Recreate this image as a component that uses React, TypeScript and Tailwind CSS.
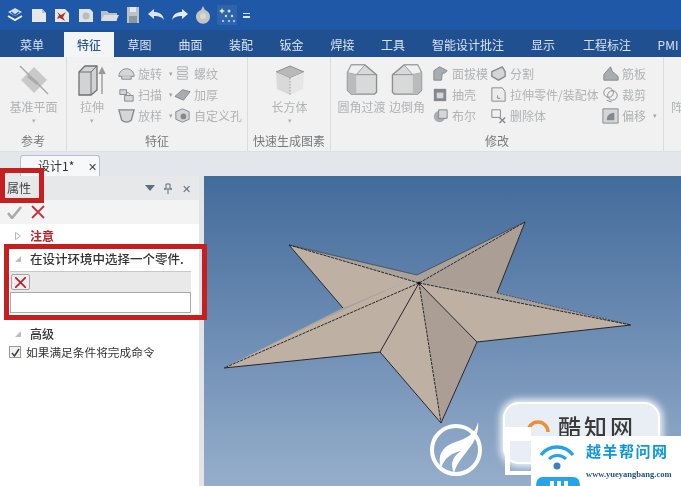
import React from "react";

const cjk = { fontFamily: '"Noto Sans CJK SC","Liberation Sans",sans-serif' };

function Q({ children }: { children: React.ReactNode }) {
  return <svg width="20" height="20" viewBox="0 0 20 20" className="shrink-0">{children}</svg>;
}

const topIcons: React.ReactNode[] = [
  <Q><path d="M3 7l7-4 7 4-7 4z" fill="#cfe0f2" /><path d="M3 11l7 4 7-4" fill="none" stroke="#e6eef8" strokeWidth="2" /><path d="M6 7l4 3 4-3" fill="none" stroke="#2f5fa8" strokeWidth="1.5" /></Q>,
  <Q><path d="M3 4h10l4 4v9H3z" fill="#e6e8ea" /><path d="M13 4l4 4h-4z" fill="#b9c2cc" /></Q>,
  <Q><path d="M3 4h10l4 4v9H3z" fill="#e6e8ea" /><path d="M5 7l4 3 5-3-3 5 2 4-5-3-3 1 2-4z" fill="#b03038" /></Q>,
  <Q><path d="M3 4h11l3 3v10H3z" fill="#dfe2e4" /><circle cx="10" cy="11" r="3.5" fill="#b7bcc0" /></Q>,
  <Q><path d="M2 6h6l2 2h8v8H2z" fill="#b9bfc5" /><path d="M5 10h15l-3 6H2z" fill="#dbdfe3" /></Q>,
  <Q><path d="M4 2h12v16H4z" fill="#bcc2c9" /><path d="M7 2h6v5H7z" fill="#e6e8ea" /><path d="M6 11h8v7H6z" fill="#8d97a3" /></Q>,
  <Q><path d="M2 9l6-5v3c5 0 9 2 10 8-2-3-5-4-10-4v3z" fill="#dce3eb" /></Q>,
  <Q><path d="M18 9l-6-5v3C7 7 3 9 2 15c2-3 5-4 10-4v3z" fill="#e6ebf0" /></Q>,
  <Q><path d="M10 1l2 4a7 7 0 1 1-4 0z" fill="#c3c5c4" /><circle cx="10" cy="11" r="3" fill="#dfd8c8" /></Q>,
];

function Launch() {
  return (
    <div className="w-[20px] h-[20px] bg-[#2f64ad] flex items-center justify-center">
      <svg width="20" height="20" viewBox="0 0 20 20">
        <path d="M5 3l1 2 2 1-2 1-1 2-1-2-2-1 2-1z" fill="#e8e6a0" />
        <circle cx="12" cy="6" r="1.5" fill="#cfe0f2" />
        <circle cx="9" cy="11" r="1.2" fill="#cfe0f2" />
        <circle cx="15" cy="11" r="1.2" fill="#cfe0f2" />
        <circle cx="6" cy="16" r="1" fill="#cfe0f2" />
        <circle cx="12" cy="16" r="1" fill="#cfe0f2" />
        <circle cx="17" cy="16" r="1" fill="#cfe0f2" />
      </svg>
    </div>
  );
}

const tabs: [string, string][] = [
  ["菜单", "w-[64px]"], ["特征", "w-[50px]"], ["草图", "w-[51px]"], ["曲面", "w-[51px]"], ["装配", "w-[50px]"], ["钣金", "w-[51px]"],
  ["焊接", "w-[51px]"], ["工具", "w-[50px]"], ["智能设计批注", "w-[100px]"], ["显示", "w-[50px]"], ["工程标注", "w-[78px]"], ["PMI", "w-[44px]"],
];

function Mini({ kind }: { kind: number }) {
  const a = "#a9adb1", b = "#d4d6d8", c = "#85898d";
  const shapes: React.ReactNode[] = [
    <><path d="M2 13c0-5 4-8 8-8s8 3 8 8z" fill={b} stroke={c} /><path d="M5 13v3h10v-3" fill={b} stroke={c} /></>,
    <><path d="M3 5h7v5H3z" fill={b} stroke={c} /><path d="M8 11h9v6H8z" fill={b} stroke={c} /><path d="M10 8c3 0 4 1 4 3" fill="none" stroke={c} /></>,
    <path d="M2 4h16l-3 11q-5 4-10 0z" fill={b} stroke={c} strokeWidth="1.4" />,
    <path d="M5 3h10v3H5zM5 8h10v3H5zM5 13h10v3H5z" fill="none" stroke={a} />,
    <path d="M2 12l8-7 8 2-7 9z" fill={a} stroke={c} />,
    <><path d="M3 6l7-3 7 3v8l-7 3-7-3z" fill={b} stroke={c} /><circle cx="11" cy="11" r="3" fill={c} /></>,
    <path d="M3 17V7l6-4 8 4-3 3-2-1-1 8z" fill={a} stroke={c} />,
    <><path d="M3 4h13v13H3z" fill={c} /><path d="M6 8h7v6H6z" fill={b} /></>,
    <><circle cx="9" cy="11" r="6" fill={a} /><path d="M8 4h9v9H8z" fill={b} stroke={c} /></>,
    <path d="M3 8l11-5 3 5v5l-7 4-7-4z" fill={b} stroke={c} strokeWidth="1.4" />,
    <><path d="M3 3h11l3 4v10H3z" fill="#ececec" stroke={c} /><path d="M9 11v3h3" fill="none" stroke={c} /></>,
    <><path d="M3 4h9v8H3z" fill="none" stroke={c} /><path d="M11 12l6 6M17 12l-6 6" stroke={c} strokeWidth="1.5" /></>,
    <path d="M3 17V11l7-8 2 5 6 5v4z" fill={a} stroke={c} />,
    <><circle cx="8" cy="8" r="5" fill="none" stroke={c} /><circle cx="12" cy="11" r="5" fill="none" stroke={c} /><path d="M6 16l5 2" stroke={c} /></>,
    <><path d="M2 3h16v15H2z" fill={b} stroke={c} /><path d="M6 15c0-5 3-8 8-8v8z" fill={c} /></>,
  ];
  return <svg width="19" height="19" viewBox="0 0 20 20" className="shrink-0">{shapes[kind]}</svg>;
}

function Row({ kind, text, arrow }: { kind: number; text: string; arrow?: boolean }) {
  return (
    <div className="h-[21px] flex items-center gap-[2px] whitespace-nowrap text-[12px] text-[#b0b2b4]">
      <Mini kind={kind} />
      <span>{text}</span>
      {arrow && <span className="ml-[5px] text-[7px] text-[#a6a6a6]">▾</span>}
    </div>
  );
}

function Big({ icon, label, arrow, w }: { icon: React.ReactNode; label: string; arrow?: boolean; w: string }) {
  return (
    <div className={`${w} shrink-0 flex flex-col items-center text-[12px] text-[#b0b2b4] whitespace-nowrap`}>
      <div className="h-[33px] flex items-end justify-center">{icon}</div>
      <div className="leading-[16px] mt-[3px]">{label}</div>
      {arrow && <div className="text-[7px] leading-[10px]">▾</div>}
    </div>
  );
}

function Group({ w, label, children }: { w: string; label: string; children: React.ReactNode }) {
  return (
    <div className={`${w} shrink-0 h-full flex flex-col border-r border-[#dcdcdc]`}>
      <div className="h-[74px] flex items-start pt-[6px]">{children}</div>
      <div className="flex-1 text-center text-[12px] text-[#77797b] leading-[20px] whitespace-nowrap">{label}</div>
    </div>
  );
}

function Chamfer({ flip }: { flip?: boolean }) {
  return (
    <svg width="34" height="33" viewBox="0 0 34 34" style={flip ? { transform: "scaleX(-1)" } : undefined}>
      <path d="M2 12L14 2h14l4 8v18l-4 4H4l-2-2z" fill="#d9d9d9" stroke="#8b8f92" strokeWidth="1.4" />
      <path d="M2 12h21l9-2" fill="none" stroke="#8b8f92" />
      <path d="M23 12L14 2h14l4 8z" fill="#f0f0f0" stroke="#9a9da0" />
      <path d="M23 12l9-2v18l-4 4h-5z" fill="#b9bbbd" />
    </svg>
  );
}

export default function App() {
  return (
    <div className="w-[681px] h-[486px] overflow-hidden flex flex-col relative blur-[0.5px] bg-[#f1f1f1]" style={cjk}>
      <div className="h-[30px] shrink-0 bg-[#1f58a6] flex items-center pl-[5px] gap-[3.500px]">
        {topIcons.map((ic, i) => (
          <React.Fragment key={i}>{ic}</React.Fragment>
        ))}
        <Launch />
        <div className="ml-[3px] w-[7px] flex flex-col gap-[2px]">
          <div className="h-[1px] bg-[#dce6f2]" />
          <div className="h-[2px] bg-[#dce6f2]" />
        </div>
      </div>

      <div className="h-[27px] shrink-0 bg-[#20508f] flex items-end overflow-hidden">
        {tabs.map(([t, w]) => (
          <div
            key={t}
            className={`${w} shrink-0 h-[25px] flex items-center justify-center text-[12px] ${t === "特征" ? "bg-[#f3f5f6] text-[#2a5a9a] font-medium" : "text-[#d9e4f1]"}`}
          >
            {t}
          </div>
        ))}
      </div>

      <div className="h-[95px] shrink-0 bg-[#f1f1f1] flex border-b border-[#e0e0e0] overflow-hidden">
        <Group w="w-[67px]" label="参考">
          <Big
            w="w-[67px]"
            label="基准平面"
            arrow
            icon={
              <svg width="32" height="32" viewBox="0 0 32 32">
                <path d="M16 3l13 13-13 13L3 16z" fill="#c9c9c9" />
                <path d="M2 2l28 28" stroke="#a8a8a8" strokeWidth="1.4" />
                <path d="M10 12l10 8" stroke="#aaa" strokeWidth="3" />
              </svg>
            }
          />
        </Group>
        <Group w="w-[181px]" label="特征">
          <Big
            w="w-[50px]"
            label="拉伸"
            arrow
            icon={
              <svg width="28" height="32" viewBox="0 0 28 32">
                <path d="M1 8l6-6h12v24l-6 5H1z" fill="#d3d3d3" stroke="#6e7174" strokeWidth="1.3" />
                <path d="M1 8h12v23M13 8l6-6" fill="none" stroke="#6e7174" />
                <path d="M24 30V6M21 10l3-6 3 6" fill="#9a9a9a" stroke="#9a9a9a" strokeWidth="1.4" />
              </svg>
            }
          />
          <div className="w-[56px] shrink-0">
            <Row kind={0} text="旋转" arrow />
            <Row kind={1} text="扫描" arrow />
            <Row kind={2} text="放样" arrow />
          </div>
          <div className="shrink-0">
            <Row kind={3} text="螺纹" />
            <Row kind={4} text="加厚" />
            <Row kind={5} text="自定义孔" />
          </div>
        </Group>
        <Group w="w-[83px]" label="快速生成图素">
          <Big
            w="w-[83px]"
            label="长方体"
            arrow
            icon={
              <svg width="30" height="32" viewBox="0 0 30 32">
                <path d="M15 2l14 6-14 6L1 8z" fill="#b9b9b9" stroke="#8d8d8d" />
                <path d="M1 8l14 6v17L2 25z" fill="#d9d9d9" />
                <path d="M29 8l-14 6v17l13-6z" fill="#e6e6e6" />
                <path d="M15 14v17" stroke="#999" strokeDasharray="1.5 1.5" />
              </svg>
            }
          />
        </Group>
        <Group w="w-[333px]" label="修改">
          <div className="w-[7px] shrink-0" />
          <Big w="w-[47px]" label="圆角过渡" icon={<Chamfer flip />} />
          <Big w="w-[44px]" label="边倒角" icon={<Chamfer />} />
          <div className="w-[60px] shrink-0 pl-[2px]">
            <Row kind={6} text="面拔模" />
            <Row kind={7} text="抽壳" />
            <Row kind={8} text="布尔" />
          </div>
          <div className="w-[112px] shrink-0">
            <Row kind={9} text="分割" />
            <Row kind={10} text="拉伸零件/装配体" />
            <Row kind={11} text="删除体" />
          </div>
          <div className="shrink-0">
            <Row kind={12} text="筋板" />
            <Row kind={13} text="裁剪" />
            <Row kind={14} text="偏移" arrow />
          </div>
        </Group>
        <div className="pt-[42px] pl-[7px] text-[12px] text-[#b0b2b4] leading-[16px]">阵</div>
      </div>

      <div className="h-[24px] shrink-0 bg-[#e3e7ec] flex items-end pl-[20px]">
        <div className="w-[80px] h-[21px] bg-[#f7f8f9] border border-b-0 border-[#b9c0c8] rounded-t-[3px] flex items-center pl-[17px] text-[12px] text-[#333]">
          <span className="w-[50px] whitespace-nowrap">设计1*</span>
          <span className="text-[11px] text-[#444]">✕</span>
        </div>
      </div>

      <div className="flex-1 flex min-h-0">
        <div className="w-[204px] shrink-0 flex flex-col bg-white border-r-[5px] border-[#e3e4e6]">
          <div className="h-[24px] shrink-0 bg-[#e7e8ea] flex items-center pl-[7px] text-[12px] text-[#444]">
            <span>属性</span>
            <svg width="10" height="6" viewBox="0 0 10 6" className="ml-[114px]"><path d="M0 0h10L5 6z" fill="#5e6e80" /></svg>
            <svg width="8" height="11" viewBox="0 0 8 11" className="ml-[9px]"><path d="M2 1h4v5h2H0h2zM4 6v5" fill="none" stroke="#5e6e80" /></svg>
            <span className="ml-[10px] text-[11px] text-[#5e6e80]">✕</span>
          </div>
          <div className="h-[24px] shrink-0 bg-[#f3f3f3] flex items-center pl-[7px] gap-[9px]">
            <svg width="15" height="13" viewBox="0 0 15 13"><path d="M1 7l4 5 9-11" fill="none" stroke="#a9aaab" strokeWidth="2.6" /></svg>
            <svg width="14" height="14" viewBox="0 0 14 14"><path d="M1 1l12 12M13 1L1 13" stroke="#c2343c" strokeWidth="1.8" /></svg>
          </div>
          <div className="flex-1 flex flex-col">
            <div className="h-[22px] flex items-center pl-[15px] mt-[1px] text-[12px]">
              <svg width="6" height="8" viewBox="0 0 6 8"><path d="M0.5 0.5L5.500 4L0.5 7.500z" fill="none" stroke="#b7b7b7" /></svg>
              <span className="ml-[9px] text-[#b3262e] font-bold">注意</span>
            </div>
            <div className="h-[24px] flex items-center pl-[15px] text-[12px]">
              <svg width="6" height="6" viewBox="0 0 6 6"><path d="M6 0v6H0z" fill="#bdbdbd" /></svg>
              <span className="ml-[9px] text-[#333] font-medium whitespace-nowrap text-[12.500px]">在设计环境中选择一个零件.</span>
            </div>
            <div className="ml-[10px] mr-[8px] h-[21px] bg-[#e9e9ea] border-t border-[#c8c8c8] flex items-center pl-[1px]">
              <div className="w-[19px] h-[16px] bg-[#eeeeee] border border-[#a5a5a5] rounded-[2px] flex items-center justify-center">
                <svg width="11" height="11" viewBox="0 0 11 11"><path d="M0 0l11 11M11 0L0 11" stroke="#b7232b" strokeWidth="1.7" /></svg>
              </div>
            </div>
            <div className="ml-[10px] mr-[8px] h-[21px] bg-white border border-[#a9a9a9]" />
            <div className="h-[21px] mt-[10px] flex items-center pl-[15px] text-[12px]">
              <svg width="6" height="6" viewBox="0 0 6 6"><path d="M6 0v6H0z" fill="#bdbdbd" /></svg>
              <span className="ml-[9px] text-[#333] font-medium">高级</span>
            </div>
            <div className="flex items-center pl-[9px] h-[16px] text-[11.700px] text-[#333]">
              <div className="w-[12px] h-[12px] border border-[#9a9a9a] bg-[#eef2f7] flex items-center justify-center">
                <svg width="9" height="9" viewBox="0 0 9 9"><path d="M1 5l2.500 3L8 1" fill="none" stroke="#334" strokeWidth="1.4" /></svg>
              </div>
              <span className="ml-[5px] whitespace-nowrap">如果满足条件将完成命令</span>
            </div>
          </div>
        </div>

        <div className="flex-1 bg-gradient-to-b from-[#436b9b] to-[#96aecb]" />
      </div>

      <svg className="absolute left-0 top-0 pointer-events-none" width="681" height="486" viewBox="0 0 681 486">
        <path d="M289 245L417 275L525 222L497 293L631 325L477 342L441 423L380 352L224 368L343 308Z" fill="#bfb0a4" />
        <path d="M419 283L525 222L497 293Z" fill="#ab9f95" />
        <path d="M419 283L477 342L441 423Z" fill="#ab9f95" />
        <path d="M224 368L343 308L417 277Q340 310 224 368Z" fill="#a9a29b" />
        <path d="M289 245L417 275L419 283Z" fill="#a9a29b" />
        <path d="M419 283L497 293L631 325Z" fill="#a9a29b" />
        <path d="M417 275L525 222L419 283Z" fill="#a9a29b" />
        <g fill="none" stroke="#27272b" strokeWidth="1">
          <path d="M289 245L343 308M525 222L497 293M631 325L477 342L441 423L380 352L224 368" />
          <path d="M419 283L477 342M419 283L380 352" />
          <path d="M289 245L417 275L525 222" strokeOpacity="0.6" />
          <path d="M289 245L419 283L525 222M419 283L631 325M419 283L224 368M419 283L441 423" strokeDasharray="3 1" />
          <path d="M497 293L631 325" strokeOpacity="0.6" strokeDasharray="2 1" />
        </g>
        <circle cx="419" cy="283" r="1.500" fill="#111" />
      </svg>

      <div className="absolute left-[0px] top-[168px] w-[44px] h-[35px] border-[5px] border-[#c5201f]" />
      <div className="absolute left-[4px] top-[244px] w-[203px] h-[76px] border-[5px] border-[#c5201f]" />

      <div className="absolute left-[503px] top-[402px] w-[157px] h-[62px] rounded-[16px] bg-[#e9eef4] border-[2px] border-white shadow-[0_0_7px_3px_rgba(255,255,255,0.85)] flex items-start pl-[20px] pt-[10px]">
        <svg width="26" height="26" viewBox="0 0 26 26" className="shrink-0"><path d="M3 18a10 10 0 0 1 20 0" fill="none" stroke="#ec8f35" strokeWidth="3.500" /></svg>
        <span className="ml-[7px] mt-[2px] text-[23px] leading-[20px] tracking-[3px] font-medium text-[#3a3a3a] whitespace-nowrap">酷知网</span>
      </div>
      <svg className="absolute left-[428px] top-[420px]" width="56" height="56" viewBox="0 0 56 56">
        <circle cx="28" cy="30" r="24" fill="none" stroke="#fff" strokeWidth="4" />
        <path d="M50 2C47 16 36 19 25 23 14 27 9 36 13 48 17 37 24 33 33 31 24 37 22 44 26 53 29 42 36 36 45 23 49 16 51 8 50 2z" fill="#fff" />
      </svg>
      <div className="absolute left-[505px] top-[427px] w-[26px] h-[48px] border-l-[5px] border-b-[4px] border-white">
        <div className="h-[14px] bg-white" />
      </div>
      <div className="absolute left-[531px] top-[436px] w-[150px] h-[50px] bg-white flex items-start pl-[2px] pt-[4px]">
        <svg width="50" height="46" viewBox="0 0 50 46" className="shrink-0">
          <path d="M8 15a20 20 0 0 1 32 0" fill="none" stroke="#27a4e8" strokeWidth="3.500" />
          <path d="M16 19a12 12 0 0 1 17 0" fill="none" stroke="#27a4e8" strokeWidth="3" />
          <circle cx="24" cy="26" r="3.500" fill="#3f7fc0" />
          <path d="M3 46q0-9 7-9h30q7 0 7 9z" fill="#27a4e8" />
          <path d="M17 46v-5h4v5M24 46v-5h4v5M31 46v-5h4v5" fill="#fff" />
        </svg>
        <div className="ml-[3px] flex flex-col">
          <div className="text-[15px] leading-[22px] text-[#0f97dd] font-bold tracking-[1.500px] whitespace-nowrap">越羊帮问网</div>
          <div className="text-[8.500px] leading-[14px] mt-[5px] text-[#25507f] font-bold whitespace-nowrap" style={{ fontFamily: '"Liberation Serif",serif' }}>www.yueyangbang.com</div>
        </div>
      </div>
    </div>
  );
}
